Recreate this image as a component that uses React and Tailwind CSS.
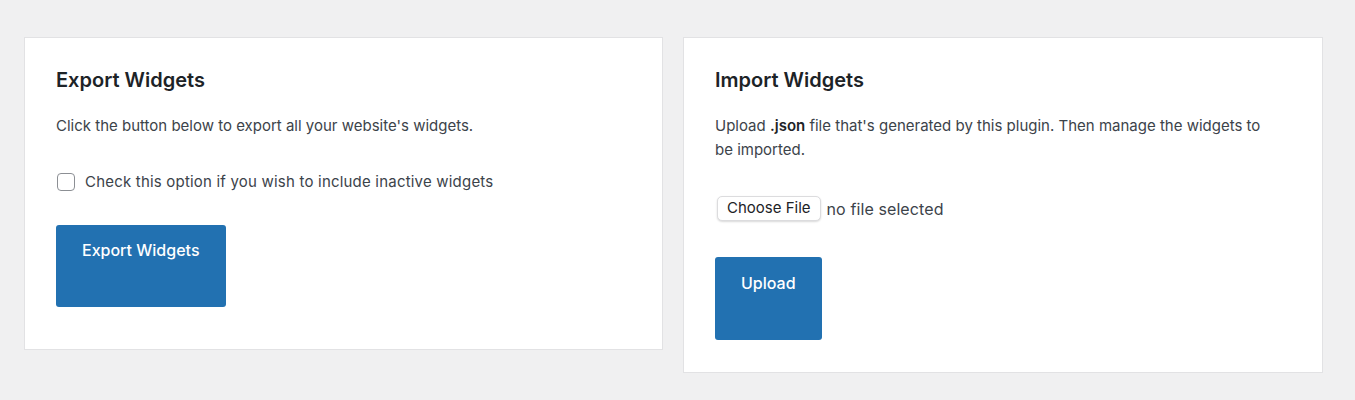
import React from 'react';

export default function App() {
  return (
    <div className="w-full min-h-screen bg-[#f0f0f1] px-6 pt-[37px] font-['Inter','Noto_Sans',sans-serif] text-[#3c434a]">
      <div className="flex items-start gap-5">
        {/* Export */}
        <div className="w-[639px] bg-white border border-[#e2e2e4] px-[31px] pt-[30px] pb-[42px]">
          <h2 className="text-[20px] leading-6 font-semibold text-[#1d2327]">Export Widgets</h2>
          <p className="mt-[22px] text-[15px] leading-6">Click the button below to export all your website's widgets.</p>
          <label className="mt-8 flex items-center h-6 text-[15px] tracking-[0.2px]">
            <span className="ml-px w-[18px] h-[18px] rounded-[4px] border border-[#8c8f94] bg-white"></span>
            <span className="ml-[10px]">Check this option if you wish to include inactive widgets</span>
          </label>
          <button className="mt-[31px] h-[82px] px-[26px] pt-[14px] flex items-start rounded-[3px] bg-[#2271b1] text-white text-[16px] leading-[22px] font-medium">
            Export Widgets
          </button>
        </div>

        {/* Import */}
        <div className="w-[640px] bg-white border border-[#e2e2e4] px-[31px] pt-[30px] pb-[32px]">
          <h2 className="text-[20px] leading-6 font-semibold text-[#1d2327]">Import Widgets</h2>
          <p className="mt-[22px] pr-6 text-[15px] leading-6">
            Upload <strong className="font-semibold text-[#1d2327]">.json</strong> file that's generated by this plugin. Then manage the widgets to be imported.
          </p>
          <div className="mt-[34px] flex items-center h-[25px]">
            <span className="ml-[2px] h-[25px] px-[9px] flex items-center rounded-[5px] border border-[#dcdcde] bg-white shadow-[0_1px_2px_rgba(0,0,0,0.15)] text-[15px] text-[#1d2327]">Choose File</span>
            <span className="ml-[6px] text-[16px] tracking-[0.1px] text-[#3c434a]">no file selected</span>
          </div>
          <button className="mt-[36px] h-[83px] px-[26px] pt-[15px] flex items-start rounded-[3px] bg-[#2271b1] text-white text-[16px] leading-[22px] font-medium">
            Upload
          </button>
        </div>
      </div>
    </div>
  );
}
